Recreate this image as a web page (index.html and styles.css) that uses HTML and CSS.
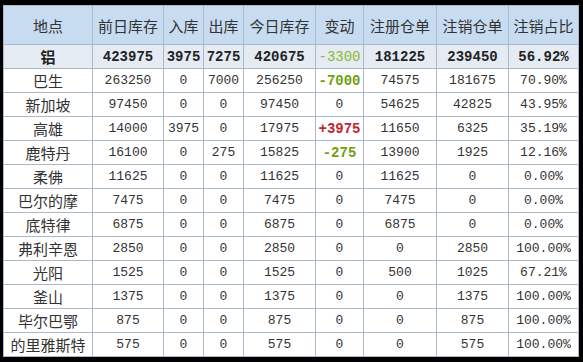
FILE: index.html
```html
<!DOCTYPE html>
<html lang="zh">
<head>
    <meta charset="UTF-8">
    <title>库存</title>
    <link rel="stylesheet" href="styles.css">
</head>
<body>
    <table class="stock">
        <colgroup>
            <col class="c-place"><col class="c-prev"><col class="c-in"><col class="c-out"><col class="c-today">
            <col class="c-chg"><col class="c-reg"><col class="c-can"><col class="c-pct">
        </colgroup>
        <thead>
            <tr>
                <th>地点</th><th>前日库存</th><th>入库</th><th>出库</th><th>今日库存</th>
                <th>变动</th><th>注册仓单</th><th>注销仓单</th><th>注销占比</th>
            </tr>
        </thead>
        <tbody>
            <tr class="total">
                <td class="name">铝</td><td>423975</td><td>3975</td><td>7275</td><td>420675</td>
                <td class="down light">-3300</td><td>181225</td><td>239450</td><td>56.92%</td>
            </tr>
            <tr><td class="name">巴生</td><td>263250</td><td>0</td><td>7000</td><td>256250</td><td class="down">-7000</td><td>74575</td><td>181675</td><td>70.90%</td></tr>
            <tr><td class="name">新加坡</td><td>97450</td><td>0</td><td>0</td><td>97450</td><td>0</td><td>54625</td><td>42825</td><td>43.95%</td></tr>
            <tr><td class="name">高雄</td><td>14000</td><td>3975</td><td>0</td><td>17975</td><td class="up">+3975</td><td>11650</td><td>6325</td><td>35.19%</td></tr>
            <tr><td class="name">鹿特丹</td><td>16100</td><td>0</td><td>275</td><td>15825</td><td class="down">-275</td><td>13900</td><td>1925</td><td>12.16%</td></tr>
            <tr><td class="name">柔佛</td><td>11625</td><td>0</td><td>0</td><td>11625</td><td>0</td><td>11625</td><td>0</td><td>0.00%</td></tr>
            <tr><td class="name">巴尔的摩</td><td>7475</td><td>0</td><td>0</td><td>7475</td><td>0</td><td>7475</td><td>0</td><td>0.00%</td></tr>
            <tr><td class="name">底特律</td><td>6875</td><td>0</td><td>0</td><td>6875</td><td>0</td><td>6875</td><td>0</td><td>0.00%</td></tr>
            <tr><td class="name">弗利辛恩</td><td>2850</td><td>0</td><td>0</td><td>2850</td><td>0</td><td>0</td><td>2850</td><td>100.00%</td></tr>
            <tr><td class="name">光阳</td><td>1525</td><td>0</td><td>0</td><td>1525</td><td>0</td><td>500</td><td>1025</td><td>67.21%</td></tr>
            <tr><td class="name">釜山</td><td>1375</td><td>0</td><td>0</td><td>1375</td><td>0</td><td>0</td><td>1375</td><td>100.00%</td></tr>
            <tr><td class="name">毕尔巴鄂</td><td>875</td><td>0</td><td>0</td><td>875</td><td>0</td><td>0</td><td>875</td><td>100.00%</td></tr>
            <tr><td class="name">的里雅斯特</td><td>575</td><td>0</td><td>0</td><td>575</td><td>0</td><td>0</td><td>575</td><td>100.00%</td></tr>
        </tbody>
    </table>
</body>
</html>
```

FILE: styles.css
```css
body {
    margin: 0;
    padding: 5px 0 0 3px;
    background: #000;
}

.stock {
    border-collapse: collapse;
    table-layout: fixed;
    width: 575px;
    background: #fff;
    color: #333;
    font-family: "Liberation Mono", "Noto Sans CJK SC", monospace;
    font-size: 13px;
}

.c-place { width: 89px; }
.c-prev { width: 71px; }
.c-in { width: 40px; }
.c-out { width: 40px; }
.c-today { width: 72px; }
.c-chg { width: 48px; }
.c-reg { width: 73px; }
.c-can { width: 72px; }
.c-pct { width: 70px; }

.stock th,
.stock td {
    border: 1px solid #a9b9c9;
    padding: 0;
    text-align: center;
    white-space: nowrap;
    overflow: hidden;
}

.stock th {
    height: 38px;
    background: #c7dcf1;
    font-family: "Noto Sans CJK SC", sans-serif;
    font-size: 15px;
    font-weight: normal;
    color: #333;
}

.stock td {
    height: 23px;
}

.stock td.name {
    font-family: "Noto Sans CJK SC", sans-serif;
    font-size: 15px;
}

.total td {
    background: #e5ebf3;
    font-weight: bold;
    font-size: 14px;
    color: #222;
}

.stock td.down {
    color: #6f9f12;
    font-weight: bold;
    font-size: 14px;
}

.stock td.down.light {
    font-weight: normal;
    color: #8cbb2a;
}

.stock td.up {
    color: #c2252f;
    font-weight: bold;
    font-size: 14px;
}
```
